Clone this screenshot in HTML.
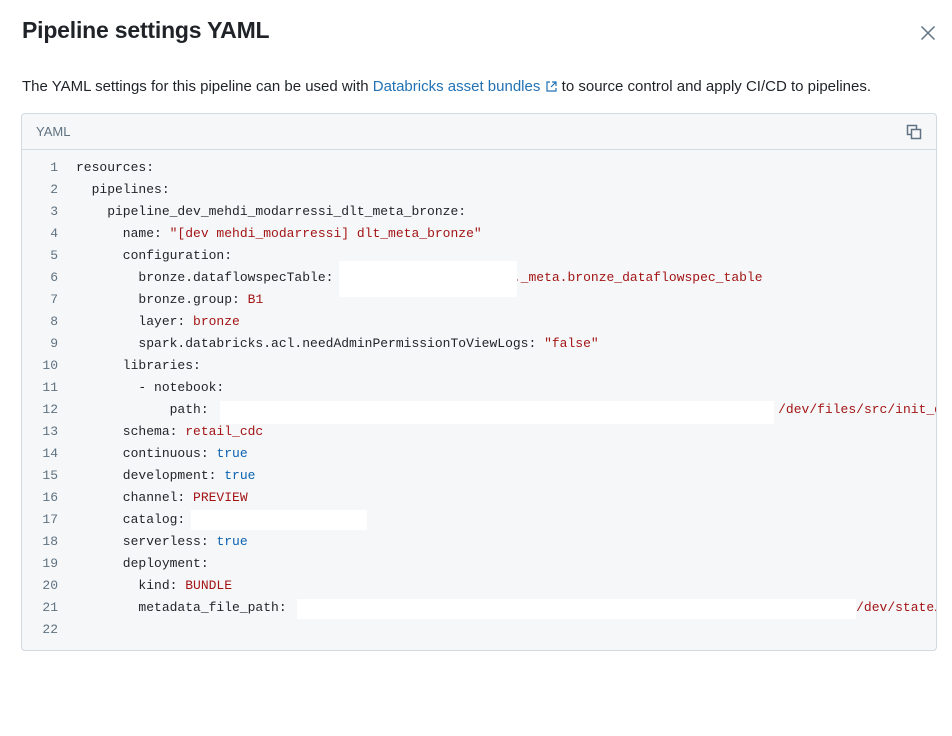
<!DOCTYPE html>
<html><head><style>
body{margin:0;width:952px;height:736px;background:#fff;font-family:"Liberation Sans",sans-serif;position:relative;overflow:hidden}
h1{position:absolute;left:22px;top:17px;margin:0;font-size:23px;font-weight:bold;color:#1f2328;letter-spacing:-0.2px}
.x{position:absolute;left:920px;top:25px}
p{position:absolute;left:22px;top:78px;margin:0;font-size:15px;color:#1f2328}
p a{color:#2272b4;text-decoration:none}
.card{position:absolute;left:21px;top:113px;width:914px;height:536px;border:1px solid #d1d9e1;border-radius:4px;background:#f6f7f9;overflow:hidden}
.hd{height:35px;border-bottom:1px solid #d1d9e1;font-size:13px;color:#5f7281;line-height:36px;padding-left:14px}
.cp{position:absolute;right:14px;top:10px}
.code{position:absolute;left:0;top:43px;font-family:"Liberation Mono",monospace;font-size:13px;line-height:22px;white-space:pre;color:#1f2328}
.ln{display:inline-block;width:36px;text-align:right;color:#5f7281;margin-right:18px}
.s{color:#a31515}.b{color:#0b63b0}
.w{position:absolute;background:#fff}
</style></head><body>
<h1>Pipeline settings YAML</h1>
<svg class="x" width="16" height="16" viewBox="0 0 16 16"><path d="M1.5 1.5L14.5 14.5M14.5 1.5L1.5 14.5" stroke="#5f7281" stroke-width="1.5"/></svg>
<p>The YAML settings for this pipeline can be used with <a>Databricks asset bundles <svg width="13" height="13" viewBox="0 0 13 13" style="vertical-align:-2px"><path d="M5 2H2v9h9V8M7 2h4v4M11 2L6 7" stroke="#2272b4" fill="none" stroke-width="1.2"/></svg></a> to source control and apply CI/CD to pipelines.</p>
<div class="card">
<div class="hd">YAML</div>
<svg class="cp" width="16" height="16" viewBox="0 0 16 16"><rect x="1.5" y="1.5" width="9" height="9" fill="none" stroke="#5f7281" stroke-width="1.5"/><rect x="5.5" y="5.5" width="9" height="9" fill="#f6f7f9" stroke="#5f7281" stroke-width="1.5"/></svg>
<div class="code"><span class="ln">1</span>resources:
<span class="ln">2</span>  pipelines:
<span class="ln">3</span>    pipeline_dev_mehdi_modarressi_dlt_meta_bronze:
<span class="ln">4</span>      name: <span class="s">"[dev mehdi_modarressi] dlt_meta_bronze"</span>
<span class="ln">5</span>      configuration:
<span class="ln">6</span>        bronze.dataflowspecTable: <span class="s">                      ._meta.bronze_dataflowspec_table</span>
<span class="ln">7</span>        bronze.group: <span class="s">B1</span>
<span class="ln">8</span>        layer: <span class="s">bronze</span>
<span class="ln">9</span>        spark.databricks.acl.needAdminPermissionToViewLogs: <span class="s">"false"</span>
<span class="ln">10</span>      libraries:
<span class="ln">11</span>        - notebook:
<span class="ln">12</span>            path: <span class="s">                                                                        /dev/files/src/init_dlt_meta</span>
<span class="ln">13</span>      schema: <span class="s">retail_cdc</span>
<span class="ln">14</span>      continuous: <span class="b">true</span>
<span class="ln">15</span>      development: <span class="b">true</span>
<span class="ln">16</span>      channel: <span class="s">PREVIEW</span>
<span class="ln">17</span>      catalog: 
<span class="ln">18</span>      serverless: <span class="b">true</span>
<span class="ln">19</span>      deployment:
<span class="ln">20</span>        kind: <span class="s">BUNDLE</span>
<span class="ln">21</span>        metadata_file_path: <span class="s">                                                                        /dev/state/metadata.json</span>
<span class="ln">22</span></div>
<div class="w" style="left:317px;top:147px;width:178px;height:36px"></div>
<div class="w" style="left:198px;top:287px;width:554px;height:23px"></div>
<div class="w" style="left:169px;top:396px;width:176px;height:20px"></div>
<div class="w" style="left:275px;top:485px;width:559px;height:20px"></div>
</div>
</body></html>
